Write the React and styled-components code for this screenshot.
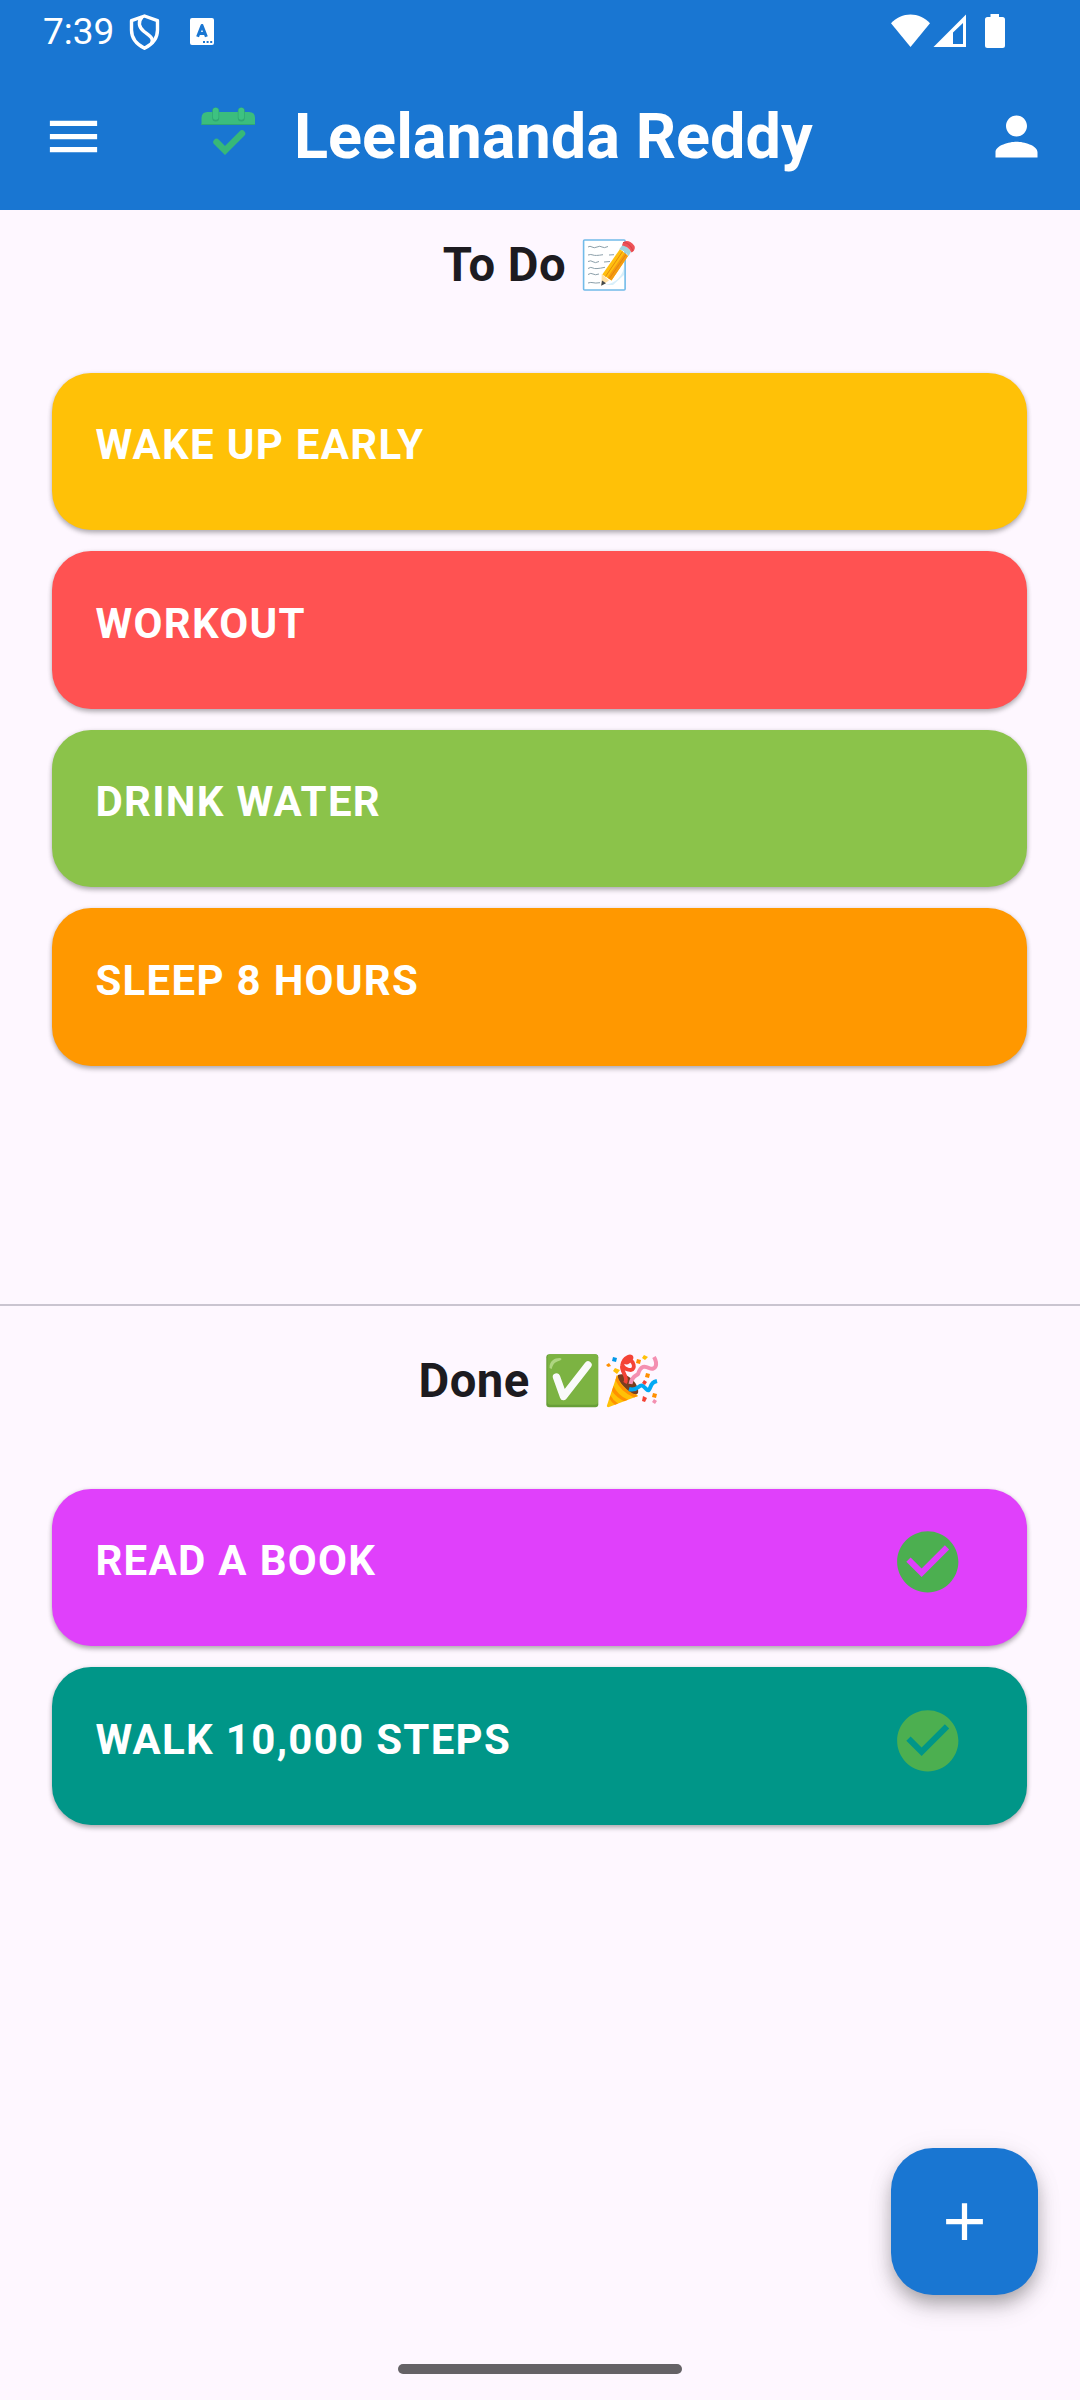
import React from 'react';
import styled, { createGlobalStyle } from 'styled-components';

const GlobalStyle = createGlobalStyle`
  *, *::before, *::after { box-sizing: border-box; }
  body { margin: 0; background: #fef7ff; font-family: Roboto, "Liberation Sans", sans-serif; }
  svg { display: block; flex: none; }
`;

const Screen = styled.div`
  width: 1080px;
  height: 2400px;
  display: flex;
  flex-direction: column;
  background: #fef7ff;
  color: #1d1b20;
  overflow: hidden;
  position: relative;
`;

const Header = styled.header`
  height: 210px;
  flex: none;
  background: #1976d2;
  color: #fff;
`;

const StatusBar = styled.div`
  height: 63px;
  display: flex;
  align-items: center;
  padding: 0 74px 0 43px;
`;

const Clock = styled.span`
  font-size: 37px;
  line-height: 60px;
  width: 84px;
`;

const StatusIcons = styled.div`
  display: flex;
  margin-left: auto;
`;

const AppBar = styled.div`
  height: 147px;
  display: flex;
  align-items: center;
  padding: 0 32px 0 42px;
`;

const Logo = styled.svg`
  margin: 0 36px 11px 95px;
`;

const Title = styled.h1`
  margin: 0;
  flex: 1;
  font-size: 63px;
  line-height: 74px;
  font-weight: 700;
`;

const Section = styled.section`
  height: ${(p) => p.$height}px;
  flex: none;
  padding: 0 53px 0 52.4px;
`;

const SectionTitle = styled.h2`
  margin: 0;
  height: ${(p) => p.$height}px;
  padding-top: ${(p) => p.$top}px;
  display: flex;
  justify-content: center;
  align-items: flex-start;
  gap: 15.5px;
  font-size: 47.25px;
  line-height: 56px;
  font-weight: 700;
  letter-spacing: 0.45px;
`;

const Emojis = styled.span`
  display: flex;
  gap: 1.5px;
  padding-top: ${(p) => p.$top || 0}px;
`;

const List = styled.ul`
  list-style: none;
  margin: 0;
  padding: 0;
  display: flex;
  flex-direction: column;
  gap: 21px;
`;

const Card = styled.li`
  height: 157.5px;
  flex: none;
  display: flex;
  justify-content: space-between;
  align-items: flex-start;
  padding: 47.5px 62.5px 0 43px;
  border-radius: 39px;
  background: ${(p) => p.$color};
  color: #fff;
  font-size: 42px;
  line-height: 49px;
  font-weight: 700;
  letter-spacing: 1.3px;
  box-shadow: 0 3px 5px rgba(0, 0, 0, 0.24), 0 1px 5px rgba(0, 0, 0, 0.12);
`;

const DoneMark = styled.svg`
  margin-top: -10.8px;
`;

const Divider = styled.hr`
  margin: 0;
  border: 0;
  height: 2px;
  flex: none;
  background: #cac4d0;
`;

const Fab = styled.button`
  position: absolute;
  right: 42px;
  bottom: 105px;
  width: 147px;
  height: 147px;
  padding: 0;
  border: 0;
  border-radius: 42px;
  display: grid;
  place-items: center;
  background: #1976d2;
  color: #fff;
  box-shadow: 0 9px 16px -2px rgba(0, 0, 0, 0.22), 0 13px 26px rgba(0, 0, 0, 0.13), 0 3px 30px rgba(0, 0, 0, 0.06);
`;

const NavHandle = styled.div`
  width: 284px;
  height: 10px;
  border-radius: 5px;
  background: #656266;
  margin: auto auto 26px;
`;

const Icon = ({ d, size = 63, ...rest }) => (
  <svg width={size} height={size} viewBox="0 0 24 24" fill="currentColor" {...rest}>
    <path d={d} />
  </svg>
);

const Shield = () => (
  <svg width="32" height="38" viewBox="0 0 32 38" fill="none" stroke="#fff" strokeWidth="3.4" strokeLinejoin="round">
    <path d="M16 3 29 7.7V17C29 25.5 23.5 31.5 16 35.2 8.5 31.5 3 25.5 3 17V7.7Z" />
    <path d="M13.5 4C9 9 10.5 14.5 15.5 18.5S26 25 23 30.5" />
  </svg>
);

const Keyboard = () => (
  <svg width="24" height="27" viewBox="0 0 24 27">
    <rect width="24" height="27" rx="2" fill="#fff" />
    <path d="M7.6 18.8 12 7.5 16.4 18.8M9 15.6h6" fill="none" stroke="#1976d2" strokeWidth="3" strokeLinejoin="round" />
    <path d="M13 23h2v2h-2zM16.6 23h2v2h-2zM20.2 23h2v2h-2z" fill="#1976d2" />
  </svg>
);

const Signals = () => (
  <svg width="115" height="36" viewBox="0 0 115 36" fill="#fff">
    <path d="M0 9.3C10.5-2.4 28.5-2.4 39 9.3L19.5 33Z" />
    <path fillRule="evenodd" d="M75 .5V33H42.5ZM72 9 62 18.5V30H72Z" />
    <path d="M99.5 0h8.5v3h3.5q2.5 0 2.5 2.5V31.5q0 2.5-2.5 2.5H96.5q-2.5 0-2.5-2.5V5.5Q94 3 96.5 3h3Z" />
  </svg>
);

const Memo = () => (
  <svg width="55" height="56" viewBox="0 0 55 56">
    <rect x="1.6" y="2" width="41.5" height="50" rx="1" fill="#fff" stroke="#72bbe9" strokeWidth="1.6" />
    <path d="M22 47C34 46 42 36 42 28V37L31 47Z" fill="#d8effa" />
    <g fill="none" stroke="#8ca0aa" strokeWidth="1">
      <path d="M6 9q2-1.5 4 0t5 0 5 0 6-.5M6 17q3-1 5 0t10-.3M27 17l5-.3M6 23.5q3-1.5 5 .3t6-.3M22 24l6-.5M6 30.5q3-2 5-.5t12-.7M6 36.500q3-2 5-.5t6 0M6 45q3-1 5-.3t7 0" />
    </g>
    <path d="M19.7 36 27 42.5 19.5 47.5Z" fill="#ffe0a3" />
    <path d="M20.3 36.5 38 11 46 18 29.5 42.5Z" fill="#ffbf0f" />
    <path d="M25.5 39.5 42.5 15 46 18 29.5 42.5Z" fill="#f49b12" />
    <path d="m23.5 38.5 17-25M27 41l17-24.5" stroke="#e2840c" strokeWidth=".9" />
    <path d="m37.2 11.2 3.5-4.5Q45 8 49 13.8L46.5 18.3Q43 12.5 37.2 11.2Z" fill="#9fd4de" />
    <path d="M40 7.5C41 1.5 48 1.5 52.5 8 53.5 10.5 52 13.5 49.5 14.5 47 10 44 8 40 7.5Z" fill="#ef5358" />
    <path d="M41 4.5C45 4.2 49 7.5 51 13" fill="none" stroke="#d9434a" strokeWidth="1.1" />
    <path d="M20 42.5 24 45.3 19.2 47.7Z" fill="#454a4c" />
  </svg>
);

const CheckEmoji = () => (
  <svg width="58" height="56" viewBox="0 0 58 56">
    <rect x="1.3" y="1.3" width="52" height="53" rx="3" fill="#689f38" />
    <rect x="2.5" y="1.3" width="50.5" height="50.5" rx="3" fill="#7cb342" />
    <path d="M4.5 15C4.5 8 9 5 15 5q3 .7 0 2.5C9 9 7.8 12 6.7 16Z" fill="#aed581" />
    <path d="M11.5 24 18.5 43.5 43 12" fill="none" stroke="#fafafa" strokeWidth="7.4" strokeLinecap="round" strokeLinejoin="round" />
  </svg>
);

const Party = () => (
  <svg width="56" height="56" viewBox="0 0 56 56">
    <path d="M12 22 1.8 53Q2 54.5 4 54L33 43Z" fill="#ffc107" />
    <path d="M12 22Q15 36 33 43L29 44.6Q15 38 10.5 27ZM8.5 33Q13 42.5 23 46.8L19 48.3Q11 44 7 38ZM5.5 42.5Q8.5 48 13 50.6L10 51.7Q6 49 4.5 45.5Z" fill="#ff9100" />
    <path d="M13 22C21 18 35 31 33 40 30 46 11 29 13 22Z" fill="#793d20" />
    <path d="M20 30C24 24 16 19 17 13 18 3 29 1 26 6 22 12 17 9 23 7 29 7 31 16 26 17 23 17 20 16 18 13" fill="none" stroke="#f44336" strokeWidth="3.8" />
    <path d="M25.500 31C27 23 31 23 33 21 36 12 40 13 44 15 51 18 53 11 49 4" fill="none" stroke="#f48fb1" strokeWidth="4" />
    <path d="M24 36C33 39 34 30 38 33S43 40 45 35 48 29 52 28" fill="none" stroke="#03a9f4" strokeWidth="4" />
    <path d="m8 4 4 1-1 4-4-1Z" fill="#0398e8" />
    <path d="m1 12 3-2 2 3-3 1ZM32 6l4 1-1 4-4-1ZM41 20l4 1-1 4-4-1ZM48 40l4 1-1 4-4-1Z" fill="#ff8f00" />
    <path d="m10 15 5 2-3 4-4-3ZM39 2l4 2-3 3-3-2Z" fill="#ffc107" />
    <path d="m39 27 3 2-2 3-3-2ZM38 43l4 2-2 4-3-1Z" fill="#f44336" />
    <path d="m49 46 3 2-2 3-3-2Z" fill="#f48fb1" />
  </svg>
);

const CHECK = 'M12 2C6.48 2 2 6.48 2 12s4.48 10 10 10 10-4.48 10-10S17.52 2 12 2zm-2 15-5-5 1.41-1.41L10 14.17l7.59-7.59L19 8l-9 9z';

const todo = [
  { name: 'WAKE UP EARLY', color: '#ffc107' },
  { name: 'WORKOUT', color: '#ff5252' },
  { name: 'DRINK WATER', color: '#8bc34a' },
  { name: 'SLEEP 8 HOURS', color: '#ff9800' },
];

const done = [
  { name: 'READ A BOOK', color: '#e040fb' },
  { name: 'WALK 10,000 STEPS', color: '#009688' },
];

const HabitList = ({ items, checked }) => (
  <List>
    {items.map((item) => (
      <Card key={item.name} $color={item.color}>
        {item.name}
        {checked && (
          <DoneMark width="73.5" height="73.5" viewBox="0 0 24 24" fill="#4caf50">
            <path d={CHECK} />
          </DoneMark>
        )}
      </Card>
    ))}
  </List>
);

export default function App() {
  return (
    <Screen>
      <GlobalStyle />
      <Header>
        <StatusBar>
          <Clock>7:39</Clock>
          <svg width="95" height="38" viewBox="0 0 95 38">
            <g transform="translate(1.5)"><Shield /></g>
            <svg x="63" y="5" width="24" height="27"><Keyboard /></svg>
          </svg>
          <StatusIcons><Signals /></StatusIcons>
        </StatusBar>
        <AppBar>
          <Icon d="M3 18h18v-2H3v2zm0-5h18v-2H3v2zm0-7v2h18V6H3z" />
          <Logo width="58" height="60" viewBox="0 0 58 60">
            <path d="M1.5 24V17Q1.5 11 7.5 11H49Q55 11 55 17V24Z" fill="#3bbd7d" />
            <path d="M1.5 23.5H55" stroke="#2fa873" />
            <path d="M15.7 10v7M41.3 10v7" stroke="#2fa873" strokeWidth="7" strokeLinecap="round" />
            <path d="M15.7 9.5v6.5M41.3 9.5v6.5" stroke="#3dc281" strokeWidth="5.6" strokeLinecap="round" />
            <path d="m16.5 41 8.5 8.5L42 32.5" fill="none" stroke="#37b878" strokeWidth="6.5" strokeLinecap="round" />
          </Logo>
          <Title>Leelananda Reddy</Title>
          <Icon d="M12 12c2.21 0 4-1.79 4-4s-1.79-4-4-4-4 1.79-4 4 1.79 4 4 4zm0 2c-2.67 0-8 1.34-8 4v2h16v-2c0-2.66-5.33-4-8-4z" />
        </AppBar>
      </Header>
      <Section $height={1094}>
        <SectionTitle $height={162.75} $top={27}>
          To Do
          <Emojis $top={1}><Memo /></Emojis>
        </SectionTitle>
        <HabitList items={todo} />
      </Section>
      <Divider />
      <Section $height={900}>
        <SectionTitle $height={182.75} $top={47}>
          Done
          <Emojis><CheckEmoji /><Party /></Emojis>
        </SectionTitle>
        <HabitList items={done} checked />
      </Section>
      <NavHandle />
      <Fab aria-label="Add habit"><Icon d="M19 13h-6v6h-2v-6H5v-2h6V5h2v6h6v2z" /></Fab>
    </Screen>
  );
}
